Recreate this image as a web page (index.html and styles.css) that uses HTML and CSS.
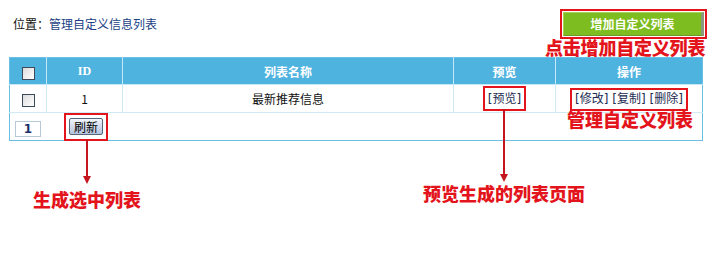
FILE: index.html
```html
<!DOCTYPE html>
<html lang="zh-CN">
<head>
<meta charset="utf-8">
<title>管理自定义信息列表</title>
<link rel="stylesheet" href="styles.css">
</head>
<body>
<div class="page">
  <div class="top">
    <div class="crumb"><span class="crumb-label">位置：</span><a class="crumb-link">管理自定义信息列表</a></div>
    <a class="add-btn mark">增加自定义列表</a>
  </div>
  <table class="list">
    <colgroup>
      <col class="c-check"><col class="c-id"><col class="c-name"><col class="c-preview"><col class="c-ops">
    </colgroup>
    <thead>
      <tr>
        <th><span class="cb"></span></th>
        <th class="th-id">ID</th>
        <th>列表名称</th>
        <th>预览</th>
        <th>操作</th>
      </tr>
    </thead>
    <tbody>
      <tr class="row">
        <td><span class="cb"></span></td>
        <td>1</td>
        <td>最新推荐信息</td>
        <td><span class="mark box-preview"><a class="lnk">[预览]</a></span></td>
        <td><span class="mark box-ops"><a class="lnk">[修改]</a> <a class="lnk">[复制]</a> <a class="lnk">[删除]</a></span></td>
      </tr>
      <tr class="foot">
        <td colspan="5">
          <div class="foot-inner">
            <span class="pager">1</span>
            <span class="mark box-refresh"><button class="refresh" type="button">刷新</button></span>
          </div>
        </td>
      </tr>
    </tbody>
  </table>

  <div class="note note-add">点击增加自定义列表</div>
  <div class="note note-manage">管理自定义列表</div>
  <div class="arrow arrow-preview"></div>
  <div class="note note-preview">预览生成的列表页面</div>
  <div class="arrow arrow-refresh"></div>
  <div class="note note-refresh">生成选中列表</div>
</div>
</body>
</html>
```
FILE: styles.css
```css
html, body {
  margin: 0;
  padding: 0;
  background: #ffffff;
}
body {
  font-family: "Noto Sans CJK SC", "DejaVu Sans", sans-serif;
  font-size: 12px;
  color: #111;
}
.page {
  position: relative;
  width: 723px;
  height: 254px;
}
.top {
  display: flex;
  justify-content: space-between;
  align-items: flex-start;
  height: 57px;
}
.crumb {
  padding: 17px 0 0 13px;
  line-height: 14px;
  font-size: 12px;
}
.crumb-label { color: #111; }
.crumb-link { color: #1c3f86; }
.add-btn {
  display: block;
  margin: 12px 19px 0 0;
  width: 137px;
  height: 22px;
  line-height: 22px;
  text-align: center;
  color: #fff;
  font-weight: bold;
  font-size: 12px;
  background: #7dbd1f;
  border-top: 1px solid #a5d45a;
  border-left: 1px solid #a5d45a;
  border-right: 3px solid #8a9a7a;
  border-bottom: 1px solid #6c9a2a;
  outline: 2px solid #e3141b;
  outline-offset: 1px;
}
.list {
  margin-left: 9px;
  width: 693px;
  table-layout: fixed;
  border-collapse: collapse;
  border: 1px solid #6bbfe2;
}
.c-check { width: 37px; }
.c-id { width: 76px; }
.c-name { width: 331px; }
.c-preview { width: 102px; }
.c-ops { width: 147px; }
.list th {
  height: 26px;
  padding: 0;
  background: #4fb3df;
  color: #fff;
  font-weight: bold;
  font-size: 12px;
  text-align: center;
  border-left: 1px solid #c6e7f5;
  border-bottom: 1px solid #c6e7f5;
}
.list th:first-child { border-left: none; }
.th-id { font-family: "Liberation Serif", serif; font-size: 13px; }
.row td {
  height: 27px;
  padding: 0;
  text-align: center;
  border-left: 1px solid #cfe9f5;
  border-bottom: 1px solid #cfe9f5;
  font-size: 12px;
}
.row td:first-child { border-left: none; }
.cb {
  display: inline-block;
  width: 11px;
  height: 11px;
  border: 1px solid #3c4a5a;
  background: linear-gradient(135deg, #dcdcdc, #ffffff);
  vertical-align: middle;
}
.lnk {
  color: #1d2b52;
  font-family: "DejaVu Sans", "Noto Sans CJK SC", sans-serif;
}
.mark { outline: 2px solid #e3141b; }
.box-preview {
  display: inline-block;
  padding: 2px 3px;
  line-height: 15px;
}
.box-ops {
  display: inline-block;
  padding: 2px 3px;
  line-height: 15px;
  font-family: "DejaVu Sans", "Noto Sans CJK SC", sans-serif;
}
.foot td {
  height: 27px;
  padding: 0;
}
.foot-inner {
  display: flex;
  align-items: center;
  padding-left: 5px;
  gap: 25px;
}
.pager {
  display: inline-block;
  width: 24px;
  height: 14px;
  line-height: 14px;
  text-align: center;
  border: 1px solid #b7c9d6;
  color: #1c2f6a;
  font-weight: bold;
  font-family: "DejaVu Sans", sans-serif;
  font-size: 12px;
  margin-top: 5px;
}
.box-refresh {
  display: inline-block;
  padding: 3px 3px 4px 3px;
  line-height: 0;
}
.refresh {
  width: 34px;
  height: 17px;
  padding: 0;
  margin: 0;
  font-family: "Noto Sans CJK SC", sans-serif;
  font-size: 12px;
  line-height: 15px;
  color: #000;
  border: 1px solid #55677d;
  border-radius: 2px;
  background: linear-gradient(#f2f6fc, #b4c3dc);
}
.note {
  position: absolute;
  color: #e3141b;
  font-family: "Noto Sans CJK SC", serif;
  font-weight: 900;
  font-size: 18px;
  line-height: 18px;
  white-space: nowrap;
}
.note-add { left: 545px; top: 38px; letter-spacing: -0.2px; }
.note-manage { left: 567px; top: 110px; }
.note-preview { left: 423px; top: 184px; }
.note-refresh { left: 33px; top: 190px; }
.arrow {
  position: absolute;
  width: 2px;
  background: #c4161c;
}
.arrow::after {
  content: "";
  position: absolute;
  left: -3px;
  bottom: -6px;
  border-left: 4px solid transparent;
  border-right: 4px solid transparent;
  border-top: 8px solid #c4161c;
}
.arrow-preview { left: 503px; top: 109px; height: 67px; }
.arrow-refresh { left: 86px; top: 140px; height: 38px; }
```
